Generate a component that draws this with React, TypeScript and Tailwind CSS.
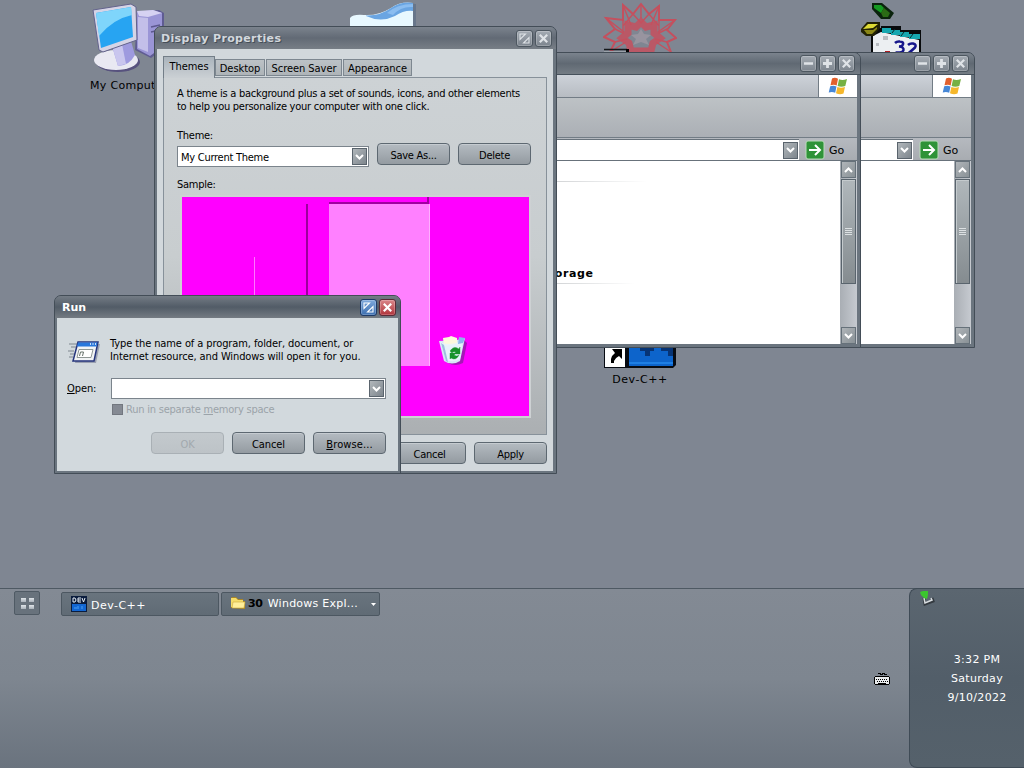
import type { ReactNode } from 'react';

const ui = "font-['DejaVu_Sans_Condensed','DejaVu_Sans',sans-serif] [font-stretch:condensed] text-[11px] leading-[13px]";
const wide = "font-['DejaVu_Sans',sans-serif] text-[11px] leading-[13px]";

type CaptionKind = 'min' | 'max' | 'size' | 'close';

function CaptionButton({ kind, active }: { kind: CaptionKind; active?: boolean }) {
  const tone = !active
    ? 'from-[#a4abb3] to-[#7d858e] border-[#4d5760]'
    : kind === 'close'
      ? 'from-[#d98589] to-[#b0333c] border-[#5b2a35]'
      : 'from-[#7fa9dc] to-[#3c6fb0] border-[#1c3a68]';
  return (
    <div className={`w-[17px] h-[17px] shrink-0 rounded-[3px] border bg-linear-to-b shadow-[inset_0_0_0_1px_rgba(255,255,255,0.22)] ${tone}`}>
      <svg viewBox="0 0 15 15" className="w-[15px] h-[15px]" fill="none" stroke={active ? '#fff' : '#dfe3e7'}>
        {kind === 'min' && <path d="M3 7.5h9" strokeWidth="2.4" />}
        {kind === 'max' && <path d="M3 7.5h9M7.5 3v9" strokeWidth="2.8" />}
        {kind === 'close' && <path d="M3.8 3.8l7.4 7.4M11.2 3.8l-7.4 7.4" strokeWidth="2.2" />}
        {kind === 'size' && <path d="M3 8.500V3H8.500zM6.500 12H12V6.500z" strokeWidth="1.1" />}
      </svg>
    </div>
  );
}

function PushButton({ children, disabled }: { children: ReactNode; disabled?: boolean }) {
  const tone = disabled
    ? 'border-[#a9b0b5] from-[#c3c9cd] to-[#bdc3c7] text-[#a2a9ae]'
    : 'border-[#5d6871] from-[#b4bbc1] via-[#a4abb1] to-[#949ba1] text-black shadow-[inset_0_1px_0_#c5cbd0]';
  return (
    <div className={`w-[73px] h-[22px] shrink-0 rounded-[4px] border bg-linear-to-b flex items-center justify-center pt-[2px] ${tone}`}>
      {children}
    </div>
  );
}

function Chevron({ up }: { up?: boolean }) {
  return (
    <svg viewBox="0 0 9 6" className="w-[9px] h-[6px]" fill="none" stroke="#fff" strokeWidth="2">
      <path d={up ? 'M1 5l3.500-3.500L8 5' : 'M1 1l3.500 3.500L8 1'} />
    </svg>
  );
}

function DropArrow() {
  return (
    <div className="w-[15px] h-[17px] shrink-0 border border-[#5a646d] bg-linear-to-br from-[#b1b7bb] to-[#7e868d] flex items-center justify-center">
      <Chevron />
    </div>
  );
}

function ScrollBar() {
  return (
    <div className="w-[17px] shrink-0 flex flex-col px-px bg-linear-to-r from-[#a9aeb4] to-[#c6cad0]">
      <div className="h-[17px] border border-[#66717a] bg-linear-to-br from-[#b0b5b9] to-[#899196] flex items-center justify-center">
        <Chevron up />
      </div>
      <div className="mt-px h-[105px] border border-[#59646d] bg-linear-to-b from-[#b0b7bb] to-[#858c90] shadow-[inset_1px_1px_0_#c4cacd] flex flex-col items-center justify-center gap-px">
        {[0, 1, 2, 3].map((n) => (
          <div key={n} className="w-[7px] h-px bg-[#dce0e2]" />
        ))}
      </div>
      <div className="mt-auto h-[17px] border border-[#66717a] bg-linear-to-br from-[#b0b5b9] to-[#899196] flex items-center justify-center">
        <Chevron />
      </div>
    </div>
  );
}

function WindowsFlag() {
  return (
    <svg viewBox="0 0 20 18" className="w-[20px] h-[18px]">
      <path d="M4 1.500Q7 0 10 1.800L8.700 8.500Q6 7 2.500 8.300z" fill="#e2602c" />
      <path d="M11 2.300Q14.500 4 19 2L17.300 8.900Q13.500 10.500 9.600 9z" fill="#76b043" />
      <path d="M2.200 9.300Q5.500 8 8.500 9.500L7.200 15.800Q4 14.300.7 15.600z" fill="#4687d6" />
      <path d="M9.400 10Q13 11.500 17 10L15.500 16.500Q12 18 8 16.300z" fill="#f5b72b" />
    </svg>
  );
}

function Frame({ className, children }: { className: string; children: ReactNode }) {
  return (
    <div className={`absolute flex flex-col rounded-t-[7px] border border-[#434d57] bg-[#6b757f] overflow-hidden ${className}`}>
      {children}
    </div>
  );
}

function ExplorerWindow({ className, heading }: { className: string; heading?: string }) {
  return (
    <Frame className={`h-[296px] top-[52px] pl-[2px] pr-[3px] pb-[3px] ${className}`}>
      <div className="-ml-[2px] -mr-[3px] h-[22px] shrink-0 border-b border-[#46515b] bg-linear-to-b from-[#7b838d] via-[#606973] to-[#747c84] flex items-center justify-end gap-[2px] pr-[5px]">
        <CaptionButton kind="min" />
        <CaptionButton kind="max" />
        <CaptionButton kind="close" />
      </div>
      <div className="h-[23px] shrink-0 flex border-b border-[#727c85] bg-linear-to-b from-[#cdd2d9] to-[#b7bcc2]">
        <div className="ml-auto w-[39px] border-l border-[#727c85] bg-white flex items-center justify-center">
          <WindowsFlag />
        </div>
      </div>
      <div className="h-[40px] shrink-0 border-b border-[#727c85] bg-linear-to-b from-[#bdc2c5] to-[#abafb5]" />
      <div className="h-[23px] shrink-0 pt-px flex items-center bg-linear-to-b from-[#b5b9bf] to-[#a8acb1] border-b border-[#68727b]">
        <div className="grow h-full bg-white border-t border-[#68727b] flex items-center justify-end pr-px">
          <DropArrow />
        </div>
        <div className="w-[58px] shrink-0 flex items-center">
          <svg viewBox="0 0 20 20" className="ml-[6px] w-[20px] h-[20px]">
            <rect x="1" y="1" width="18" height="18" rx="2" fill="#2f9338" stroke="#b9dcb9" />
            <path d="M4 10h11M10 5l5 5-5 5" fill="none" stroke="#fff" strokeWidth="2" />
          </svg>
          <span className={`ml-[4px] pt-px ${wide}`}>Go</span>
        </div>
      </div>
      <div className="grow flex bg-white min-h-0">
        <div className="grow flex flex-col">
          {heading && (
            <>
              <div className="mt-[20px] ml-[54px] w-[90px] h-px bg-linear-to-r from-[#d3d5d7] to-white" />
              <div className={`mt-[85px] ml-px font-bold tracking-[0.6px] ${wide}`}>{heading}</div>
              <div className="mt-[3px] ml-[54px] w-[78px] h-px bg-linear-to-r from-[#d3d5d7] to-white" />
            </>
          )}
        </div>
        <ScrollBar />
      </div>
    </Frame>
  );
}

function RecycleBin() {
  return (
    <svg viewBox="0 0 30 31" className="absolute left-[256px] top-[138px] w-[30px] h-[31px]">
      <path d="M3 7l22-3 3 3-4 20q-8 4-15 0z" fill="#5b2a7a" opacity=".55" transform="translate(1 1)" />
      <path d="M1 6l5 20q8 5 16 0L27 3 19 5z" fill="#d6e6f6" />
      <path d="M5 3l6-1 2-1 6 2v6l-13 2z" fill="#fdf8dc" />
      <path d="M2 7q10 5 23-2l-3 19q-7 4-14 1z" fill="#eaf3fb" opacity=".85" />
      <path d="M3 8l5 18 2 1L6 10z" fill="#9dbde0" />
      <path d="M21 2l6 1-2 5-5 1z" fill="#8db5ee" />
      <path d="M12 16q4-6 9-2l1-2v7h-6l2-2q-3-1-4 1zM21 20q-3 6-8 3l-1 1v-6h6l-2 2q3 2 5 0z" fill="#17922a" stroke="#17922a" strokeWidth=".4" />
    </svg>
  );
}

function DisplayProperties() {
  return (
    <Frame className="left-[154px] top-[26px] w-[403px] h-[448px] pl-[2px] pr-[3px] pb-[2px]">
      <div className="-ml-[2px] -mr-[3px] h-[22px] shrink-0 bg-linear-to-b from-[#7b838d] via-[#626a75] to-[#777e86] flex items-center gap-[2px] pl-[6px] pr-[4px]">
        <span className={`grow font-bold text-[#d3d8dd] [text-shadow:1px_1px_0_#454e58] tracking-[0.35px] ${wide}`}>Display Properties</span>
        <CaptionButton kind="size" />
        <CaptionButton kind="close" />
      </div>
      <div className={`grow bg-[#d2d8dc] px-[6px] pt-[7px] flex flex-col tracking-[-0.26px] ${ui}`}>
        <div className="flex items-end h-[22px] shrink-0 relative -mb-px tracking-[-0.05px]">
          <div className="w-[52px] h-[22px] border border-b-0 border-[#737e88] bg-linear-to-b from-[#aab4bc] to-[#cbd0d4] text-center pt-[3px]">Themes</div>
          <div className="mb-[2px] w-[50px] h-[17px] border border-[#7d8790] bg-linear-to-b from-[#bcc2c6] to-[#aeb4b8] text-center pt-[2px]">Desktop</div>
          <div className="mb-[2px] ml-px w-[76px] h-[17px] border border-[#7d8790] bg-linear-to-b from-[#bcc2c6] to-[#aeb4b8] text-center pt-[2px]">Screen Saver</div>
          <div className="mb-[2px] ml-px w-[69px] h-[17px] border border-[#7d8790] bg-linear-to-b from-[#bcc2c6] to-[#aeb4b8] text-center pt-[2px]">Appearance</div>
        </div>
        <div className="w-[384px] h-[358px] shrink-0 border border-[#87919a] bg-linear-to-b from-[#cdd2d5] via-[#c8cdcf] to-[#abafb2] pl-[13px] pt-[9px] flex flex-col">
          <p className="whitespace-nowrap">
            A theme is a background plus a set of sounds, icons, and other elements
            <br />
            to help you personalize your computer with one click.
          </p>
          <div className="mt-[16px]">Theme:</div>
          <div className="mt-px flex h-[25px]">
            <div className="mt-[3px] w-[192px] h-[21px] bg-white border border-[#7b848c] flex items-center pl-[3px] pr-px">
              <span className="grow pt-px">My Current Theme</span>
              <DropArrow />
            </div>
            <div className="ml-[8px] flex gap-[8px]">
              <PushButton>Save As...</PushButton>
              <PushButton>Delete</PushButton>
            </div>
          </div>
          <div className="mt-[10px]">Sample:</div>
          <div className="relative mt-[4px] ml-[3px] w-[351px] h-[223px] border-2 border-[#cdd1d3] bg-[#ff00ff] overflow-hidden">
            <div className="absolute left-[72px] top-[60px] w-px h-[60px] bg-[#ff77ff]" />
            <div className="absolute left-[124px] top-[7px] w-[2px] h-[110px] bg-[#9c009c]" />
            <div className="absolute left-[147px] top-0 w-[100px] h-[7px] border-b-2 border-r-2 border-[#a000a0]" />
            <div className="absolute left-[147px] top-[7px] w-[101px] h-[162px] border-r border-[#ffb0ff] bg-[#ff80ff]" />
            <RecycleBin />
          </div>
        </div>
        <div className="mt-[7px] flex justify-end gap-[8px]">
          <PushButton>Cancel</PushButton>
          <PushButton>Apply</PushButton>
        </div>
      </div>
    </Frame>
  );
}

function RunIcon() {
  return (
    <svg viewBox="0 0 34 26" className="w-[34px] h-[26px]">
      <path d="M1 5h8M3 8h5M0 12h6M2 15h5M1 18h4" stroke="#7f878f" fill="none" />
      <path d="M11 5h21l-4 19H7z" fill="#9aa0b0" />
      <path d="M10 3h20l-4 19H5z" fill="#f1f3f5" stroke="#26357c" strokeWidth="1.500" />
      <path d="M10 3.500h19.500l-1 4H9z" fill="#2877dc" />
      <path d="M11 10.500h14l-2 8H9z" fill="#fff" stroke="#8f9795" />
      <path d="M11.500 17l1-4h3l-1 4" fill="none" stroke="#657069" />
      <path d="M22 5h1M24.500 5h1M27 5h1" stroke="#fff" strokeWidth="1.500" />
    </svg>
  );
}

function RunDialog() {
  return (
    <Frame className="left-[54px] top-[295px] w-[347px] h-[179px] px-[2px] pb-[2px]">
      <div className="-mx-[2px] h-[22px] shrink-0 bg-linear-to-b from-[#747c85] via-[#525c67] to-[#747b82] flex items-center gap-[2px] pl-[7px] pr-[4px]">
        <span className={`grow font-bold text-white ${wide}`}>Run</span>
        <CaptionButton kind="size" active />
        <CaptionButton kind="close" active />
      </div>
      <div className={`grow bg-[#d2d9dd] pl-[11px] pr-[12px] pt-[19px] flex flex-col tracking-[-0.1px] ${ui}`}>
        <div className="flex">
          <div className="w-[42px] pt-[2px]">
            <RunIcon />
          </div>
          <p className="whitespace-nowrap">
            Type the name of a program, folder, document, or
            <br />
            Internet resource, and Windows will open it for you.
          </p>
        </div>
        <div className="mt-[13px] flex items-center">
          <span className="-ml-px w-[44px]"><u>O</u>pen:</span>
          <div className="w-[275px] h-[21px] border border-[#7b848c] bg-white flex items-center justify-end pr-px">
            <DropArrow />
          </div>
        </div>
        <div className="mt-[4px] ml-[44px] flex items-center gap-[3px] text-[#9ba3a9] tracking-[-0.22px]">
          <div className="w-[11px] h-[11px] bg-[#858a93] border border-[#72777f]" />
          <span>Run in separate <u>m</u>emory space</span>
        </div>
        <div className="mt-[16px] flex justify-end gap-[8px]">
          <PushButton disabled>OK</PushButton>
          <PushButton>Cancel</PushButton>
          <PushButton><span className="tracking-[0.1px]"><u>B</u>rowse...</span></PushButton>
        </div>
      </div>
    </Frame>
  );
}

export default function App() {
  return (
    <div className="relative w-[1024px] h-[768px] overflow-hidden bg-[#7f8692] text-black">
      <DesktopIcons />
      <ExplorerWindow className="left-[800px] w-[175px]" />
      <ExplorerWindow className="left-[500px] w-[361px]" heading="Files Storage" />
      <DisplayProperties />
      <RunDialog />
      <Taskbar />
    </div>
  );
}

function DesktopIcons() {
  return (
    <>
      <svg viewBox="0 0 74 74" className="absolute left-[91px] top-0 w-[74px] h-[74px]">
        <path d="M46 12l22-2 5 3v35l-13 10-16-8z" fill="#5f5c92" />
        <path d="M46 12l16-2 9 3v34l-12 9-13-7z" fill="#9a95d6" />
        <path d="M46 11l16-1 9 3-14 4-9-1z" fill="#d6d2f2" />
        <path d="M47 17l10 1v34l-10-4z" fill="#c3bfe9" />
        <path d="M60 27l9-2M60 32l9-2" stroke="#5c588f" strokeWidth="1.500" />
        <ellipse cx="27" cy="62" rx="22" ry="10" fill="#57527e" />
        <ellipse cx="25" cy="60" rx="22" ry="10" fill="#e9e9f2" />
        <path d="M21 46l19-5 4 14q-6 11-17 11z" fill="#9e9adf" />
        <path d="M21 46l10-2 4 20-8 2z" fill="#c9c6ee" />
        <path d="M2 10L40 4l5 3 1 33-34 12-4-2z" fill="#d5d4e6" stroke="#63638c" />
        <path d="M5 13l35-6 2 30-32 11z" fill="#27a4f2" />
        <path d="M5 13l35-6 1 8Q22 19 8 36z" fill="#7fd5fb" />
      </svg>
      <div className={`absolute left-[90px] top-[79px] whitespace-nowrap tracking-[0.3px] ${wide}`}>My Computer</div>
      <svg viewBox="0 0 68 30" className="absolute left-[349px] top-0 w-[68px] h-[30px]">
        <path d="M3 18q6-3 14-1Q30 17 42 9 54 2 67 4v26H3z" fill="#596d85" opacity=".6" />
        <path d="M1 18q3-4 14-3 14 1 27-7Q52 1 64 3v27H1z" fill="#e8f8ff" />
        <path d="M17 15.500Q31 16 42 8 53 1 64 3v8Q55 10 46 16q-14 7-29 0z" fill="#6aa5e2" />
        <path d="M38 13Q48 4 64 4v3Q52 6 44 15z" fill="#8bbdf0" />
        <path d="M32 30q3-3 12-3l8 3z" fill="#9dd0f5" />
      </svg>
      <svg viewBox="0 0 74 54" className="absolute left-[603px] top-0 w-[74px] h-[54px]" fill="none" stroke="#c4505e" strokeWidth="2">
        <path d="M7 52l5-10-11-5 11-8-9-11 17 2V5l10 9 8-10 8 10 10-8v14h16l-8 10 9 8-9 4 4 10" />
        <path d="M20 19v14l-8-4M12 42l12-3M30 14l-10 12M30 14l8 9 8-9 10 12M56 19v14l8-4M64 42l-12-3M38 4v14M20 5l8 20M56 6l-8 19M3 18l18 14M72 20L55 32M7 52l16-10M68 52L53 42" strokeWidth="1.400" />
        <path d="M38 22l5 5 8-2v8l6 5-7 5-2 8H28l-2-8-7-5 6-5v-8l8 2z" strokeWidth="7" opacity=".85" />
        <path d="M38 29l3 5 7 1-5 4 3 6-8-3-8 3 3-6-5-4 7-1z" fill="#98949f" stroke="none" />
        <path d="M1 49.500h23" stroke="#14171a" strokeWidth="1.500" />
        <path d="M23 49h3v3h-3z" fill="#000" stroke="none" />
        <path d="M1 51h22v2H1z" fill="#9aa1a9" stroke="none" />
      </svg>
      <svg viewBox="0 0 64 56" className="absolute left-[860px] top-0 w-[64px] h-[56px]">
        <path d="M11 28h10v-2h20v4h20v26H11z" fill="#080a0c" />
        <path d="M13 36l8-4 38 8v14H13z" fill="#eceff2" />
        <path d="M22 28h9v2h9v2h9v2h11v5H49v-2h-9v-2h-9v-2h-9z" fill="#16a7b0" />
        <path d="M32 33l3-4M41 36l3-4M50 38l3-4" stroke="#07282b" />
        <path d="M23 36h5v4h-5zM16 43h3v3h-3z" fill="#b9bdc2" />
        <path d="M12 3h10l12 10-4 6H21l-9-10z" fill="#0b230d" />
        <path d="M14 5h7l3 3-3 5-7-5z" fill="#159a22" />
        <path d="M21 13l3-5 6 5-2 4h-5z" fill="#2b6b15" />
        <path d="M1 29l6-7h13v6l-6 8H6l-5-4z" fill="#222204" />
        <path d="M3 29l5-5h10l-5 4z" fill="#dedb35" />
        <path d="M4 30h9l4-3v2l-5 5H7z" fill="#8b8716" />
        <path d="M35 43q2-2 5-1.500 4 .5 3 3-1 2-4 2 5 .5 4.500 3.500-.5 3-8 2.500" fill="none" stroke="#17178b" strokeWidth="2.500" />
        <path d="M48 45q2-2 5-1.500 4 1 2 4-3 3-7 6h9" fill="none" stroke="#17178b" strokeWidth="2.500" />
        <path d="M25 51h5v3h-5z" fill="#b21d22" />
      </svg>
      <svg viewBox="0 0 74 26" className="absolute left-[603px] top-[343px] w-[74px] h-[26px]">
        <path d="M1 0h72v22l-3 3H1z" fill="#070b12" />
        <path d="M2 1h20v23H2z" fill="#fff" />
        <path d="M9 6h10v10l-3-3q-4 2-5 5v2H8v-4q1-4 4-6z" fill="#000" />
        <path d="M26 3h44v20H26z" fill="#0d64cb" />
        <path d="M37 4h14v4h-4v5h-5V8h-5zM58 4h12v9h-5V8h-7z" fill="#073475" />
        <path d="M26 19h44v2H26z" fill="#1e7fe4" />
      </svg>
      <div className={`absolute left-[600px] top-[373px] w-[80px] text-center tracking-[0.6px] ${wide}`}>Dev-C++</div>
    </>
  );
}

function Taskbar() {
  return (
    <div className={`absolute left-0 top-[588px] w-full h-[180px] flex border-t border-[#4e5963] bg-linear-to-b from-[#838a94] via-[#7e8690] to-[#6a737e] text-white ${wide}`}>
      <div className="ml-[14px] mt-[2px] w-[26px] h-[24px] rounded-[2px] border border-[#4f5a64] bg-[#68727c] grid grid-cols-[5px_5px] gap-[3px] content-center justify-center">
        {[0, 1, 2, 3].map((n) => (
          <div key={n} className="w-[5px] h-[4px] bg-linear-to-b from-[#e0e5e9] to-[#aab2ba]" />
        ))}
      </div>
      <div className="ml-[21px] mt-[3px] w-[158px] h-[24px] rounded-[2px] border border-[#4c5761] bg-linear-to-b from-[#69747e] to-[#606b75] flex items-center pl-[9px]">
        <svg viewBox="0 0 16 16" className="w-[16px] h-[16px]">
          <path d="M0 0h16v16H0z" fill="#0a1c3d" />
          <path d="M1 8h14v7H1z" fill="#1266d2" />
          <path d="M2 2h2l1 2-1 2H2zM10 6H7V2h3M7 4h3M11 2l1.500 4L14 2" fill="none" stroke="#e5edf5" />
          <path d="M3 12h3M7 10v3M11 10v3" stroke="#4aa0f5" />
        </svg>
        <span className="ml-[4px] mt-[2px] tracking-[0.5px]">Dev-C++</span>
      </div>
      <div className="ml-[2px] mt-[3px] w-[159px] h-[24px] rounded-[2px] border border-[#4c5761] bg-linear-to-b from-[#69747e] to-[#606b75] flex items-center pl-[8px] pr-[3px] whitespace-nowrap">
        <svg viewBox="0 0 16 14" className="w-[16px] h-[14px] mb-[2px]">
          <path d="M1 12V2l1-1h4l2 2h5v2h2v8z" fill="#aa8625" />
          <path d="M1 11V2h5l2 2h5v7z" fill="#f5dd6b" />
          <path d="M3 6h12l-1 6H2z" fill="#ffef9a" stroke="#cba83a" strokeWidth=".6" />
        </svg>
        <span className="ml-[2px] mb-px font-bold text-black tracking-[-0.3px]">30</span>
        <span className="ml-[5px] mb-px grow tracking-[0.25px]">Windows Expl...</span>
        <svg viewBox="0 0 5 3" className="w-[5px] h-[3px]"><path d="M0 0h5L2.500 3z" fill="#fff" /></svg>
      </div>
      <svg viewBox="0 0 16 14" className="ml-auto mr-[19px] mt-[83px] w-[16px] h-[14px]" shapeRendering="crispEdges">
        <path d="M0 5h1V4h14v1h1v7h-1v1H1v-1H0z" fill="#000" />
        <path d="M1 5h14v7H1z" fill="#e9ecee" />
        <path d="M2 7.500h12M3 9.500h11" stroke="#000" strokeDasharray="1 1" />
        <path d="M4 11h8" stroke="#000" />
        <path d="M4 1h2v1h2V1h2v1h2v1" fill="none" stroke="#000" />
      </svg>
      <div className="-mt-px w-[115px] h-[180px] rounded-l-[8px] border border-r-0 border-[#3f4b56] bg-linear-to-b from-[#5b6670] via-[#525e69] to-[#55616b] flex flex-col">
        <svg viewBox="0 0 16 16" className="ml-[9px] mt-px w-[16px] h-[16px]">
          <path d="M5 8l1 6 8-3-1-3" fill="none" stroke="#343a40" strokeWidth="3" />
          <path d="M5 8l1 5 7-3-1-2" fill="none" stroke="#d9dde0" strokeWidth="1.500" />
          <path d="M1 2l3-1h5v4l-1 4-3-1-3-3z" fill="#3bc52e" />
        </svg>
        <div className="mt-[44px] pl-[20px] flex flex-col items-center leading-[19px] tracking-[0.3px]">
          <span>3:32 PM</span>
          <span>Saturday</span>
          <span>9/10/2022</span>
        </div>
      </div>
    </div>
  );
}
